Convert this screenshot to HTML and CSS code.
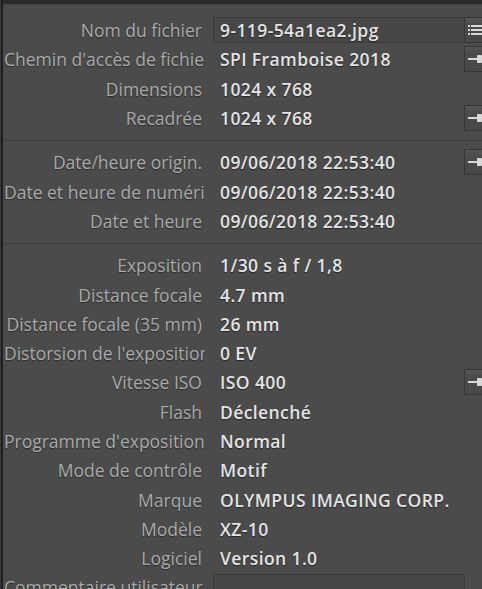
FILE: index.html
```html
<!DOCTYPE html>
<html>
<head>
	<title>Métadonnées</title>
	<link rel="stylesheet" href="styles.css">
</head>
<body>
	<div class="panel">
		<div class="topbar"></div>
		<div class="section first">
			<div class="row">
				<span class="label">Nom du fichier</span>
				<span class="value field">9-119-54a1ea2.jpg</span>
				<span class="btn"><svg width="26" height="26" viewBox="0 0 26 26"><g fill="#d8d8d8"><rect x="4" y="8" width="2" height="2"/><rect x="4" y="12" width="2" height="2"/><rect x="4" y="16" width="2" height="2"/><rect x="7" y="8" width="12" height="2"/><rect x="7" y="12" width="12" height="2"/><rect x="7" y="16" width="12" height="2"/></g></svg></span>
			</div>
			<div class="row">
				<span class="label">Chemin d'accès de fichier</span>
				<span class="value">SPI Framboise 2018</span>
				<span class="btn"><svg width="26" height="26" viewBox="0 0 26 26"><g fill="#d8d8d8"><rect x="4" y="12" width="10" height="2"/><rect x="13" y="9" width="5" height="8" rx="1"/></g></svg></span>
			</div>
			<div class="row">
				<span class="label">Dimensions</span>
				<span class="value">1024 x 768</span>
			</div>
			<div class="row">
				<span class="label">Recadrée</span>
				<span class="value">1024 x 768</span>
				<span class="btn"><svg width="26" height="26" viewBox="0 0 26 26"><g fill="#d8d8d8"><rect x="4" y="12" width="10" height="2"/><rect x="13" y="9" width="5" height="8" rx="1"/></g></svg></span>
			</div>
		</div>
		<div class="section">
			<div class="row">
				<span class="label">Date/heure origin.</span>
				<span class="value">09/06/2018 22:53:40</span>
				<span class="btn"><svg width="26" height="26" viewBox="0 0 26 26"><g fill="#d8d8d8"><rect x="4" y="12" width="10" height="2"/><rect x="13" y="9" width="5" height="8" rx="1"/></g></svg></span>
			</div>
			<div class="row">
				<span class="label">Date et heure de numérisation</span>
				<span class="value">09/06/2018 22:53:40</span>
			</div>
			<div class="row">
				<span class="label">Date et heure</span>
				<span class="value">09/06/2018 22:53:40</span>
			</div>
		</div>
		<div class="section last">
			<div class="row">
				<span class="label">Exposition</span>
				<span class="value">1/30 s à f / 1,8</span>
			</div>
			<div class="row">
				<span class="label">Distance focale</span>
				<span class="value">4.7 mm</span>
			</div>
			<div class="row">
				<span class="label">Distance focale (35 mm)</span>
				<span class="value">26 mm</span>
			</div>
			<div class="row">
				<span class="label">Distorsion de l'exposition</span>
				<span class="value">0 EV</span>
			</div>
			<div class="row">
				<span class="label">Vitesse ISO</span>
				<span class="value">ISO 400</span>
				<span class="btn"><svg width="26" height="26" viewBox="0 0 26 26"><g fill="#d8d8d8"><rect x="4" y="12" width="10" height="2"/><rect x="13" y="9" width="5" height="8" rx="1"/></g></svg></span>
			</div>
			<div class="row">
				<span class="label">Flash</span>
				<span class="value">Déclenché</span>
			</div>
			<div class="row">
				<span class="label">Programme d'exposition</span>
				<span class="value">Normal</span>
			</div>
			<div class="row">
				<span class="label">Mode de contrôle</span>
				<span class="value">Motif</span>
			</div>
			<div class="row">
				<span class="label">Marque</span>
				<span class="value">OLYMPUS IMAGING CORP.</span>
			</div>
			<div class="row">
				<span class="label">Modèle</span>
				<span class="value">XZ-10</span>
			</div>
			<div class="row">
				<span class="label">Logiciel</span>
				<span class="value">Version 1.0</span>
			</div>
			<div class="row">
				<span class="label">Commentaire utilisateur</span>
				<span class="value field"></span>
			</div>
		</div>
	</div>
</body>
</html>
```

FILE: styles.css
```css
html, body {
	margin: 0;
	padding: 0;
	width: 482px;
	height: 589px;
	overflow: hidden;
	background-color: #3a3a3a;
}

.panel {
	margin-left: 1px;
	height: 589px;
	border-left: 2px solid #1e1e1e;
	background-color: #4b4b4b;
	font-family: "Open Sans", Lato, sans-serif;
	font-size: 17.5px;
}

.topbar {
	height: 4px;
	background-color: #2b2b2b;
	border-bottom: 1px solid #444;
}

.section {
	padding: 7px 0;
	border-bottom: 1px solid #3c3c3c;
}

.section.first {
	padding-top: 10.5px;
}

.section.last {
	border-bottom: none;
}

.row {
	display: grid;
	grid-template-columns: 201px 260px 26px;
	align-items: center;
	height: 29.3px;
	padding-left: 1px;
}

.label {
	overflow: hidden;
	white-space: nowrap;
	text-align: right;
	padding-right: 3px;
	color: #aaa;
	text-shadow: 0 1px 1px rgba(0, 0, 0, 0.45);
}

.value {
	grid-column: 2;
	margin-left: 8px;
	padding-left: 7px;
	white-space: nowrap;
	overflow: hidden;
	font-weight: 600;
	letter-spacing: 0.4px;
	color: #e4e4e4;
	text-shadow: 0 1px 1px rgba(0, 0, 0, 0.5);
}

.value.field {
	height: 24px;
	line-height: 24px;
	padding-left: 6px;
	border: 1px solid #3b3b3b;
	background-color: #474747;
}

.btn {
	grid-column: 3;
	width: 26px;
	height: 26px;
	margin-left: -1px;
	box-sizing: border-box;
	border: 1px solid #363636;
	background: linear-gradient(#555 0, #4b4b4b 6px, #484848);
	display: flex;
}

.btn svg {
	margin: -1px;
}
```
